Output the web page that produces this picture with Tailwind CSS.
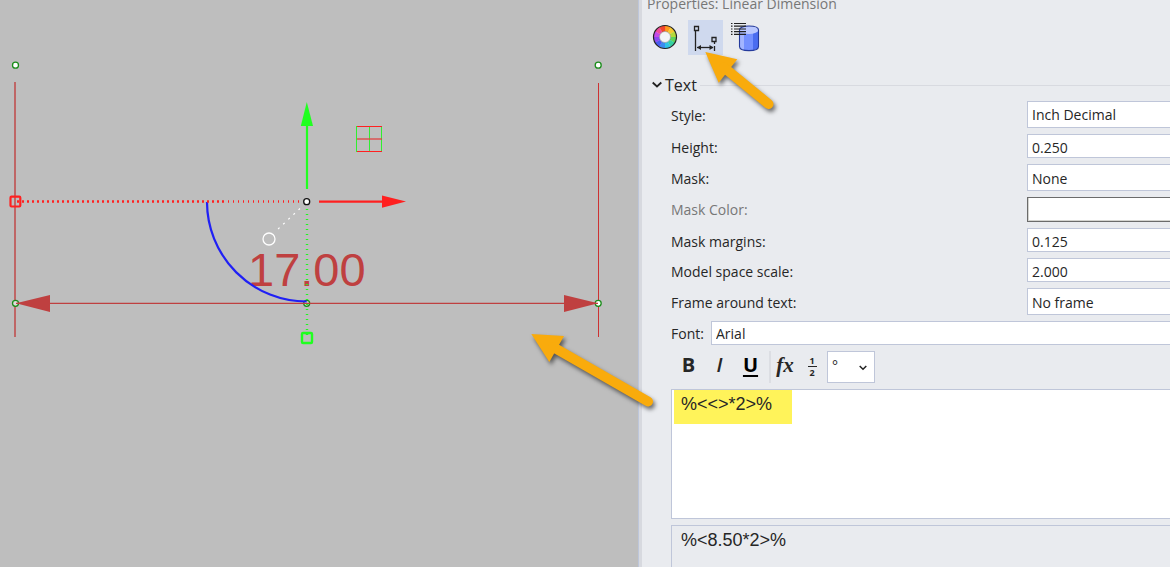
<!DOCTYPE html>
<html lang="en">
<head>
  <meta charset="UTF-8" />
  <meta name="viewport" content="width=device-width, initial-scale=1" />
  <title>Properties: Linear Dimension</title>
  <script src="https://cdn.jsdelivr.net/npm/@tailwindcss/browser@4"></script>
</head>
<body class="bg-[#e9ebef] font-['Open_Sans','Noto_Sans',sans-serif] text-[14px] text-[#262626]">

<div class="relative grid grid-cols-[638fr_4px_528fr] h-screen overflow-hidden">

  <!-- Drawing canvas -->
  <main class="bg-[#bebebe] overflow-hidden">
    <svg width="638" height="567" viewBox="0 0 638 567" fill="none" class="block">
      <!-- extension lines -->
      <path d="M15 82V337" stroke="#bf4040" stroke-opacity=".7" stroke-width="2" />
      <path d="M598.5 83V337" stroke="#cc3232" />
      <circle cx="15.500" cy="65.200" r="3" fill="#fff" stroke="#1a8c1a" stroke-width="1.300" />
      <circle cx="598.200" cy="65.200" r="3" fill="#fff" stroke="#1a8c1a" stroke-width="1.300" />
      <circle cx="15.500" cy="303.300" r="3" fill="#ddd" stroke="#1a8c1a" stroke-width="1.300" />
      <circle cx="598.200" cy="303.300" r="3" fill="#fff" stroke="#1a8c1a" stroke-width="1.300" />
      <circle cx="306.700" cy="303.300" r="3" fill="#ddd" stroke="#1a8c1a" stroke-width="1.300" />

      <!-- dimension line -->
      <path d="M16 303.400H598" stroke="#bf4040" stroke-width="1.200" />
      <path d="M16 303.300L50 295V312ZM598 303.300L564 295V312Z" fill="#bf4040" />
      <text x="248" y="286" fill="#bf4040" font-size="47" font-family="'Liberation Sans', Arial, sans-serif">17.00</text>

      <!-- rotation arc -->
      <path d="M207 202A99.700 99.700 0 0 0 306.700 301.500" stroke="#2020f5" stroke-width="2.200" />

      <!-- dotted guides -->
      <path d="M17 201.500H227" stroke="#ff2020" stroke-width="2.600" stroke-dasharray="2 3" />
      <path d="M228 201.500H303" stroke="#ff2020" stroke-width="2.600" stroke-dasharray="1 4" />
      <path d="M307 209V336" stroke="#20f520" stroke-width="2.400" stroke-dasharray="1 4" />
      <path d="M300 208.500L277 230" stroke="#fff" stroke-width="1.200" stroke-dasharray="2 5" />

      <!-- move handles -->
      <rect x="10.500" y="196.700" width="9.800" height="9.800" rx="1" stroke="#ff2020" stroke-width="2.200" />
      <rect x="302" y="333" width="10" height="10" rx="1" stroke="#20ff20" stroke-width="2.400" />
      <circle cx="269" cy="239" r="6" stroke="#fff" stroke-width="1.300" />
      <circle cx="306.700" cy="201.700" r="3" fill="#fff" stroke="#111" stroke-width="1.300" />

      <!-- axes -->
      <path d="M307 189V125" stroke="#20ff20" stroke-width="2.200" />
      <path d="M306.800 102L313 126H300.800Z" fill="#20ff20" />
      <path d="M319 201.600H383" stroke="#ff2020" stroke-width="2.200" />
      <path d="M406 201.600L382 195.400V207.800Z" fill="#ff2020" />

      <!-- plane marker -->
      <path d="M356.500 126V152M369.500 126V152M381.500 126V152" stroke="#30ee30" />
      <path d="M357 126.500H382M357 151.500H382" stroke="#ff2020" />
      <path d="M357 139H382" stroke="#e04040" stroke-opacity=".8" stroke-width="1.600" />
    </svg>
  </main>

  <div class="bg-[#d7d9df] border-l border-[#bdc6da]"></div>

  <!-- Properties panel -->
  <aside class="flex flex-col min-w-0 overflow-hidden">
    <h1 class="h-5 pl-[5px] -mt-1.5 mb-1.5 leading-5 text-[#777]">Properties: Linear Dimension</h1>

    <div class="flex gap-1.5 pl-[5px]">
      <button type="button" aria-label="Appearance" class="size-[35px]">
        <svg width="35" height="35" viewBox="0 0 35 35" fill="none">
          <g id="wheel" stroke-width="6"></g>
          <circle cx="18" cy="17" r="11.500" stroke="#222" stroke-width="1.200" />
          <circle cx="18" cy="17" r="5.500" fill="#f3f4f8" stroke="#777" stroke-width=".5" />
        </svg>
      </button>
      <button type="button" aria-label="Dimension" class="size-[35px] bg-[#cfd9ee]">
        <svg width="35" height="35" viewBox="0 0 35 35" fill="none" stroke="#222" stroke-width="1.300">
          <path d="M6.500 6.500H10.500V10.500H6.500ZM24 17.500H28V21.500H24ZM7.500 11V31M26.500 22V24M26.500 26V31" />
          <path d="M9 27.500H25" />
          <path d="M9 27.500L13 25V30ZM25.500 27.500L21.500 25V30Z" fill="#222" stroke="none" />
        </svg>
      </button>
      <button type="button" aria-label="Database" class="size-[35px]">
        <svg width="35" height="35" viewBox="0 0 35 35" fill="none">
          <path d="M10.500 10V26.500C10.500 32 29.500 32 29.500 26.500V10Z" fill="#7490ff" />
          <path d="M24 12V30C28 29 29.500 28 29.500 26.500V10Z" fill="#4a6cf0" />
          <path d="M10.500 10V26.500C10.500 28 12 29 15 30V12Z" fill="#a3b5ff" />
          <ellipse cx="20" cy="10" rx="9.500" ry="4" fill="#b9c7ff" />
          <path d="M10.500 10V26.500C10.500 32 29.500 32 29.500 26.500V10C29.500 4.700 10.500 4.700 10.500 10" stroke="#243a9c" stroke-width="1.100" />
          <path d="M2 3.500H3.500M2 6.200H3.500M2 9H3.500M2 11.700H3.500M2 14.400H3.500M5 3.500H17M5 6.200H17M5 9H17M5 11.700H17M5 14.400H17" stroke="#222" stroke-width="1.200" />
        </svg>
      </button>
    </div>

    <div class="flex items-center gap-[3px] h-6 mt-[18px] pl-2.5">
      <button type="button" class="flex items-center gap-[3px] text-[16px] leading-6">
        <svg width="10" height="10" viewBox="0 0 10 10" fill="none"><path d="M.7 2.500L5 6.500L9.300 2.500" stroke="#222" stroke-width="1.800" /></svg>
        Text
      </button>
      <span class="flex-1 h-px bg-[#d8dae0]"></span>
    </div>

    <form class="flex flex-col gap-1.5 flex-1 mt-1 pl-[29px]">
      <div class="grid grid-cols-[356px_1fr] items-center gap-y-1.5">
        <label for="style" class="pt-0.5">Style:</label>
        <select id="style" class="appearance-none h-[27px] pl-1 bg-white border border-r-0 border-[#bfc6d9]"><option>Inch Decimal</option></select>

        <label for="height" class="pt-0.5">Height:</label>
        <input id="height" type="text" value="0.250" class="min-w-0 h-6 pl-1 pt-0.5 bg-white border border-r-0 border-[#bfc6d9]" />

        <label for="mask" class="pt-0.5">Mask:</label>
        <select id="mask" class="appearance-none h-[27px] pl-1 pt-0.5 bg-white border border-r-0 border-[#bfc6d9]"><option>None</option></select>

        <span id="maskColor" class="text-[#777]">Mask Color:</span>
        <button type="button" disabled aria-labelledby="maskColor" class="h-[25px] bg-white border border-r-0 border-[#6b6b6b] shadow-[inset_1px_-1px_0_#d4d4d0]"></button>

        <label for="margins" class="pt-0.5">Mask margins:</label>
        <input id="margins" type="text" value="0.125" class="min-w-0 h-6 pl-1 pt-0.5 bg-white border border-r-0 border-[#bfc6d9]" />

        <label for="scale" class="pt-0.5">Model space scale:</label>
        <input id="scale" type="text" value="2.000" class="min-w-0 h-6 pl-1 pt-0.5 bg-white border border-r-0 border-[#bfc6d9]" />

        <label for="frame" class="pt-0.5">Frame around text:</label>
        <select id="frame" class="appearance-none h-[27px] pl-1 pt-0.5 bg-white border border-r-0 border-[#bfc6d9]"><option>No frame</option></select>
      </div>

      <div class="flex items-center">
        <label for="font" class="w-10">Font:</label>
        <input id="font" type="text" value="Arial" class="flex-1 min-w-0 h-6 pl-1 bg-white border border-r-0 border-[#bfc6d9]" />
      </div>

      <!-- Text formatting -->
      <div class="flex items-center h-8 pl-0.5">
        <button type="button" class="w-[31px] h-8 pb-1 text-[20px] leading-7 font-bold">B</button>
        <button type="button" class="w-[31px] h-8 pb-1 text-[20px] leading-7 font-semibold italic">I</button>
        <button type="button" class="w-[31px] h-8 pb-1 text-[20px] leading-7 font-bold underline underline-offset-3 text-black">U</button>
        <span class="w-0.5 h-8 ml-[3px] bg-[#dcdee3]"></span>
        <button type="button" class="w-7 h-8 pb-1 text-[21px] leading-7 font-semibold italic font-['Liberation_Serif',serif]">fx</button>
        <button type="button" aria-label="Fraction" class="flex flex-col items-center w-[26px] text-[9px] leading-[10px] font-bold">
          <span class="w-[9px] border-b border-[#262626]">1</span>
          <span class="pt-px">2</span>
        </button>
        <div class="relative ml-0.5">
          <select aria-label="Symbol" class="appearance-none block w-12 h-8 pl-1 pb-1 bg-white border border-[#bfc6d9]"><option>°</option></select>
          <svg width="8" height="6" viewBox="0 0 8 6" fill="none" class="absolute right-2 top-3.5 pointer-events-none"><path d="M.7 1L4 4.300L7.300 1" stroke="#222" stroke-width="1.500" /></svg>
        </div>
      </div>

      <div class="relative h-[130px] bg-white border border-r-0 border-[#bfc6d9]">
        <div class="absolute left-0.5 top-0 w-[118px] h-[34px] bg-[#fff35a]"></div>
        <textarea aria-label="Dimension text" spellcheck="false" class="relative block size-full resize-none pl-[9px] pt-1 text-[18px] leading-5 font-['Liberation_Sans',Arial,sans-serif]">%&lt;&lt;&gt;*2&gt;%</textarea>
      </div>

      <output class="flex-1 min-h-[60px] pl-[9px] pt-1 border border-r-0 border-[#bfc6d9] text-[18px] leading-5 font-['Liberation_Sans',Arial,sans-serif]">%&lt;8.50*2&gt;%</output>
    </form>
  </aside>

  <!-- Callout arrows -->
  <svg width="1170" height="567" viewBox="0 0 1170 567" class="absolute left-0 top-0 pointer-events-none drop-shadow-[2px_3px_2px_rgba(0,0,0,0.55)]" fill="#f9ab0c" stroke="#f9ab0c">
    <path d="M705.300 52L737.300 59.300L718.700 82.700Z" stroke="none" />
    <path d="M724 67.500L768.500 104" stroke-width="10" stroke-linecap="round" />
    <path d="M531.300 334L564 336L549.300 362Z" stroke="none" />
    <path d="M553 347L648 401.500" stroke-width="10" stroke-linecap="round" />
  </svg>
</div>

<script>
  // Colour wheel segments, clockwise from the top
  const colors = ['#ff9a1c', '#f5c931', '#b4d93a', '#5fd35a', '#35cfa0', '#2fc3e6', '#3a8df0', '#4a5cf0', '#8a4af0', '#c44ae6', '#f04a9a', '#f0452e'];
  const point = deg => {
    const a = deg * Math.PI / 180;
    return `${18 + 8.5 * Math.sin(a)} ${17 - 8.5 * Math.cos(a)}`;
  };
  document.getElementById('wheel').innerHTML = colors.map((c, i) =>
    `<path d="M${point(i * 30)}A8.500 8.500 0 0 1 ${point(i * 30 + 31)}" stroke="${c}" />`
  ).join('');
</script>
</body>
</html>
